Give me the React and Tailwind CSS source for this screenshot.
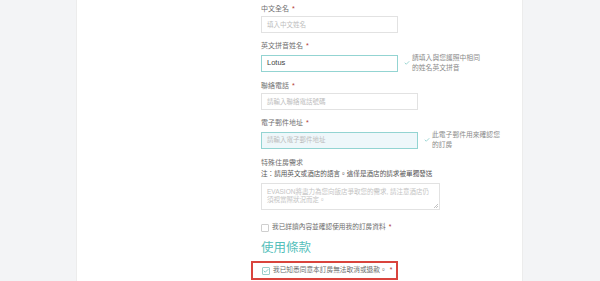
import { Check } from 'lucide-react';

const FONT = { fontFamily: '"Liberation Sans", "Noto Sans CJK TC", sans-serif' };

function Label({ text, required = true }) {
  return (
    <div className="h-[10px] text-[7px] leading-[10px] text-[#707070]">
      {text}
      {required && <span className="ml-[3px] text-[#b03a32]">*</span>}
    </div>
  );
}

function Hint({ lines }) {
  return (
    <div className="ml-[6px] flex items-center">
      <Check className="mr-[2px] h-[6px] w-[6px] text-[#7fc9c6]" strokeWidth={3} />
      <div className="text-[6.8px] leading-[10px] text-[#8a8a8a]">
        {lines.map((l) => (
          <div key={l}>{l}</div>
        ))}
      </div>
    </div>
  );
}

function Field({ label, placeholder, value, width, active, filled, hint }) {
  return (
    <div className="mb-[8px]">
      <Label text={label} />
      <div className="mt-[2px] flex items-center">
        <div
          className={`flex h-[17px] items-center border px-[5px] text-[6.5px] ${width} ${
            active ? 'border-[#93d4d2]' : 'border-[#e2e2e2]'
          } ${filled ? 'bg-[#eef7fa]' : 'bg-white'}`}
        >
          {value ? (
            <span className="text-[7.5px] text-[#444]">{value}</span>
          ) : (
            <span className="text-[#bdbdbd]">{placeholder}</span>
          )}
        </div>
        {hint && <Hint lines={hint} />}
      </div>
    </div>
  );
}

export default function App() {
  return (
    <div className="flex h-[281px] w-[600px] overflow-hidden bg-white" style={FONT}>
      <div className="w-[77px] shrink-0 border-r border-[#ececec] bg-[#f3f4f6]" />
      <div className="flex-1 pl-[184px] pt-[4px]">
        <Field label="中文全名" placeholder="填入中文姓名" width="w-[137px]" />
        <Field
          label="英文拼音姓名"
          value="Lotus"
          width="w-[137px]"
          active
          hint={['請填入與您護照中相同', '的姓名英文拼音']}
        />
        <Field label="聯絡電話" placeholder="請輸入聯絡電話號碼" width="w-[157px]" />
        <Field
          label="電子郵件地址"
          placeholder="請輸入電子郵件地址"
          width="w-[157px]"
          active
          filled
          hint={['此電子郵件用來確認您', '的訂房']}
        />
        <Label text="特殊住房需求" required={false} />
        <div className="mt-[1px] h-[10px] text-[6.6px] leading-[10px] text-[#555]">
          注：請用英文或酒店的語言。這僅是酒店的請求被單獨發送
        </div>
        <div className="relative mt-[4px] h-[27px] w-[179px] border border-[#e2e2e2] px-[5px] pt-[4px] text-[6.5px] leading-[8px] text-[#c4c4c4]">
          EVASION將盡力為您向飯店爭取您的需求, 請注意酒店仍須視當際狀況而定。
          <svg className="absolute bottom-[1px] right-[1px] h-[4px] w-[4px]" viewBox="0 0 4 4">
            <path d="M4 0L0 4M4 2L2 4" stroke="#999" strokeWidth="0.6" />
          </svg>
        </div>
        <div className="mt-[12px] flex h-[11px] items-center">
          <div className="h-[8px] w-[8px] rounded-[1px] border border-[#cfcfcf] bg-white" />
          <span className="ml-[3px] text-[6.7px] text-[#6b6b6b]">
            我已詳讀內容並確認使用我的訂房資料
            <span className="ml-[3px] text-[#b03a32]">*</span>
          </span>
        </div>
        <div className="mt-[8px] h-[14px] text-[12.5px] leading-[14px] text-[#56bfbb]">使用條款</div>
        <div className="ml-[-10px] mt-[6px] flex h-[19px] w-[147px] items-center border-2 border-[#d9443d] pl-[9px]">
          <div className="flex h-[8px] w-[8px] items-center justify-center rounded-[1px] border border-[#9ccfcd] bg-white">
            <Check className="h-[6px] w-[6px] text-[#5bbcb8]" strokeWidth={3} />
          </div>
          <span className="ml-[3px] text-[6.7px] text-[#6b6b6b]">
            我已知悉同意本訂房無法取消或退款。
            <span className="ml-[3px] text-[#b03a32]">*</span>
          </span>
        </div>
      </div>
      <div className="w-[78px] shrink-0 border-l border-[#ececec] bg-[#f3f4f6]" />
    </div>
  );
}
